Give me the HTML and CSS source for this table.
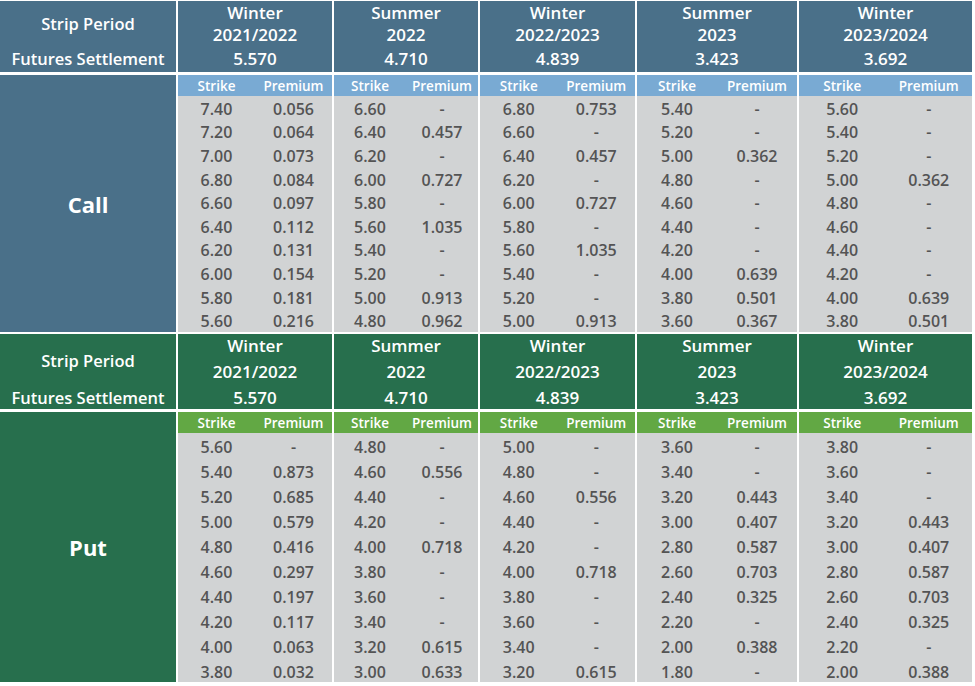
FILE: index.html
```html
<!DOCTYPE html>
<html>
<head>
<meta charset="utf-8">
<link rel="stylesheet" href="styles.css">
</head>
<body>
<div class="board">
  <section class="block call">
    <div class="head label-head"><span class="strip">Strip Period</span><span class="fut">Futures Settlement</span></div>
    <div class="head period"><span>Winter</span><span>2021/2022</span><span>5.570</span></div>
    <div class="head period"><span>Summer</span><span>2022</span><span>4.710</span></div>
    <div class="head period"><span>Winter</span><span>2022/2023</span><span>4.839</span></div>
    <div class="head period"><span>Summer</span><span>2023</span><span>3.423</span></div>
    <div class="head period"><span>Winter</span><span>2023/2024</span><span>3.692</span></div>
    <div class="side">Call</div>
    <div class="col">
      <div class="sub"><span>Strike</span><span>Premium</span></div>
      <div class="rows">
        <div class="row"><span>7.40</span><span>0.056</span></div>
        <div class="row"><span>7.20</span><span>0.064</span></div>
        <div class="row"><span>7.00</span><span>0.073</span></div>
        <div class="row"><span>6.80</span><span>0.084</span></div>
        <div class="row"><span>6.60</span><span>0.097</span></div>
        <div class="row"><span>6.40</span><span>0.112</span></div>
        <div class="row"><span>6.20</span><span>0.131</span></div>
        <div class="row"><span>6.00</span><span>0.154</span></div>
        <div class="row"><span>5.80</span><span>0.181</span></div>
        <div class="row"><span>5.60</span><span>0.216</span></div>
      </div>
    </div>
    <div class="col">
      <div class="sub"><span>Strike</span><span>Premium</span></div>
      <div class="rows">
        <div class="row"><span>6.60</span><span>-</span></div>
        <div class="row"><span>6.40</span><span>0.457</span></div>
        <div class="row"><span>6.20</span><span>-</span></div>
        <div class="row"><span>6.00</span><span>0.727</span></div>
        <div class="row"><span>5.80</span><span>-</span></div>
        <div class="row"><span>5.60</span><span>1.035</span></div>
        <div class="row"><span>5.40</span><span>-</span></div>
        <div class="row"><span>5.20</span><span>-</span></div>
        <div class="row"><span>5.00</span><span>0.913</span></div>
        <div class="row"><span>4.80</span><span>0.962</span></div>
      </div>
    </div>
    <div class="col">
      <div class="sub"><span>Strike</span><span>Premium</span></div>
      <div class="rows">
        <div class="row"><span>6.80</span><span>0.753</span></div>
        <div class="row"><span>6.60</span><span>-</span></div>
        <div class="row"><span>6.40</span><span>0.457</span></div>
        <div class="row"><span>6.20</span><span>-</span></div>
        <div class="row"><span>6.00</span><span>0.727</span></div>
        <div class="row"><span>5.80</span><span>-</span></div>
        <div class="row"><span>5.60</span><span>1.035</span></div>
        <div class="row"><span>5.40</span><span>-</span></div>
        <div class="row"><span>5.20</span><span>-</span></div>
        <div class="row"><span>5.00</span><span>0.913</span></div>
      </div>
    </div>
    <div class="col">
      <div class="sub"><span>Strike</span><span>Premium</span></div>
      <div class="rows">
        <div class="row"><span>5.40</span><span>-</span></div>
        <div class="row"><span>5.20</span><span>-</span></div>
        <div class="row"><span>5.00</span><span>0.362</span></div>
        <div class="row"><span>4.80</span><span>-</span></div>
        <div class="row"><span>4.60</span><span>-</span></div>
        <div class="row"><span>4.40</span><span>-</span></div>
        <div class="row"><span>4.20</span><span>-</span></div>
        <div class="row"><span>4.00</span><span>0.639</span></div>
        <div class="row"><span>3.80</span><span>0.501</span></div>
        <div class="row"><span>3.60</span><span>0.367</span></div>
      </div>
    </div>
    <div class="col">
      <div class="sub"><span>Strike</span><span>Premium</span></div>
      <div class="rows">
        <div class="row"><span>5.60</span><span>-</span></div>
        <div class="row"><span>5.40</span><span>-</span></div>
        <div class="row"><span>5.20</span><span>-</span></div>
        <div class="row"><span>5.00</span><span>0.362</span></div>
        <div class="row"><span>4.80</span><span>-</span></div>
        <div class="row"><span>4.60</span><span>-</span></div>
        <div class="row"><span>4.40</span><span>-</span></div>
        <div class="row"><span>4.20</span><span>-</span></div>
        <div class="row"><span>4.00</span><span>0.639</span></div>
        <div class="row"><span>3.80</span><span>0.501</span></div>
      </div>
    </div>
  </section>

  <section class="block put">
    <div class="head label-head"><span class="strip">Strip Period</span><span class="fut">Futures Settlement</span></div>
    <div class="head period"><span>Winter</span><span>2021/2022</span><span>5.570</span></div>
    <div class="head period"><span>Summer</span><span>2022</span><span>4.710</span></div>
    <div class="head period"><span>Winter</span><span>2022/2023</span><span>4.839</span></div>
    <div class="head period"><span>Summer</span><span>2023</span><span>3.423</span></div>
    <div class="head period"><span>Winter</span><span>2023/2024</span><span>3.692</span></div>
    <div class="side">Put</div>
    <div class="col">
      <div class="sub"><span>Strike</span><span>Premium</span></div>
      <div class="rows">
        <div class="row"><span>5.60</span><span>-</span></div>
        <div class="row"><span>5.40</span><span>0.873</span></div>
        <div class="row"><span>5.20</span><span>0.685</span></div>
        <div class="row"><span>5.00</span><span>0.579</span></div>
        <div class="row"><span>4.80</span><span>0.416</span></div>
        <div class="row"><span>4.60</span><span>0.297</span></div>
        <div class="row"><span>4.40</span><span>0.197</span></div>
        <div class="row"><span>4.20</span><span>0.117</span></div>
        <div class="row"><span>4.00</span><span>0.063</span></div>
        <div class="row"><span>3.80</span><span>0.032</span></div>
      </div>
    </div>
    <div class="col">
      <div class="sub"><span>Strike</span><span>Premium</span></div>
      <div class="rows">
        <div class="row"><span>4.80</span><span>-</span></div>
        <div class="row"><span>4.60</span><span>0.556</span></div>
        <div class="row"><span>4.40</span><span>-</span></div>
        <div class="row"><span>4.20</span><span>-</span></div>
        <div class="row"><span>4.00</span><span>0.718</span></div>
        <div class="row"><span>3.80</span><span>-</span></div>
        <div class="row"><span>3.60</span><span>-</span></div>
        <div class="row"><span>3.40</span><span>-</span></div>
        <div class="row"><span>3.20</span><span>0.615</span></div>
        <div class="row"><span>3.00</span><span>0.633</span></div>
      </div>
    </div>
    <div class="col">
      <div class="sub"><span>Strike</span><span>Premium</span></div>
      <div class="rows">
        <div class="row"><span>5.00</span><span>-</span></div>
        <div class="row"><span>4.80</span><span>-</span></div>
        <div class="row"><span>4.60</span><span>0.556</span></div>
        <div class="row"><span>4.40</span><span>-</span></div>
        <div class="row"><span>4.20</span><span>-</span></div>
        <div class="row"><span>4.00</span><span>0.718</span></div>
        <div class="row"><span>3.80</span><span>-</span></div>
        <div class="row"><span>3.60</span><span>-</span></div>
        <div class="row"><span>3.40</span><span>-</span></div>
        <div class="row"><span>3.20</span><span>0.615</span></div>
      </div>
    </div>
    <div class="col">
      <div class="sub"><span>Strike</span><span>Premium</span></div>
      <div class="rows">
        <div class="row"><span>3.60</span><span>-</span></div>
        <div class="row"><span>3.40</span><span>-</span></div>
        <div class="row"><span>3.20</span><span>0.443</span></div>
        <div class="row"><span>3.00</span><span>0.407</span></div>
        <div class="row"><span>2.80</span><span>0.587</span></div>
        <div class="row"><span>2.60</span><span>0.703</span></div>
        <div class="row"><span>2.40</span><span>0.325</span></div>
        <div class="row"><span>2.20</span><span>-</span></div>
        <div class="row"><span>2.00</span><span>0.388</span></div>
        <div class="row"><span>1.80</span><span>-</span></div>
      </div>
    </div>
    <div class="col">
      <div class="sub"><span>Strike</span><span>Premium</span></div>
      <div class="rows">
        <div class="row"><span>3.80</span><span>-</span></div>
        <div class="row"><span>3.60</span><span>-</span></div>
        <div class="row"><span>3.40</span><span>-</span></div>
        <div class="row"><span>3.20</span><span>0.443</span></div>
        <div class="row"><span>3.00</span><span>0.407</span></div>
        <div class="row"><span>2.80</span><span>0.587</span></div>
        <div class="row"><span>2.60</span><span>0.703</span></div>
        <div class="row"><span>2.40</span><span>0.325</span></div>
        <div class="row"><span>2.20</span><span>-</span></div>
        <div class="row"><span>2.00</span><span>0.388</span></div>
      </div>
    </div>
  </section>
</div>
</body>
</html>
```

FILE: styles.css
```css
* { box-sizing: border-box; }
html, body {
  margin: 0;
  padding: 0;
  background: #ffffff;
}
body {
  font-family: "Open Sans", "Lato", sans-serif;
  font-weight: 600;
  padding-top: 1px;
}
.board {
  display: flex;
  flex-direction: column;
  gap: 2px;
  width: 973px;
}
.block {
  display: grid;
  grid-template-columns: 176px 154px 144px 155px 160px 173px;
  column-gap: 2px;
  row-gap: 3px;
}
.call { grid-template-rows: 71px 257px; }
.put { grid-template-rows: 75px 270px; }

.head {
  color: #ffffff;
  font-size: 17px;
  display: grid;
  text-align: center;
  align-items: center;
}
.label-head { font-size: 16.5px; }
.call .head { background: #4a7089; grid-template-rows: 22px 22px 1fr; }
.put .head { background: #276f4d; grid-template-rows: 22px 30px 1fr; }
.label-head .strip { grid-row: 1 / span 2; }
.label-head .fut { grid-row: 3; }

.side {
  color: #ffffff;
  font-size: 22px;
  font-weight: 700;
  display: flex;
  align-items: center;
  justify-content: center;
}
.call .side { background: #4a7089; }
.put .side { background: #276f4d; }

.col {
  display: grid;
  grid-template-rows: 21px 1fr;
  background: #d1d3d4;
  min-height: 0;
}
.sub, .row {
  display: grid;
  grid-template-columns: 1fr 1fr;
  text-align: center;
  align-items: center;
}
.sub {
  color: #ffffff;
  font-size: 13.5px;
  line-height: 16px;
}
.call .sub { background: #79aad3; }
.put .sub { background: #62a844; }
.rows {
  display: grid;
  grid-template-rows: repeat(10, 1fr);
  min-height: 0;
}
.row {
  min-height: 0;
  line-height: 16px;
  padding-top: 2px;
  color: #545454;
  font-size: 16px;
}
.put .row { padding-top: 4px; }
```
